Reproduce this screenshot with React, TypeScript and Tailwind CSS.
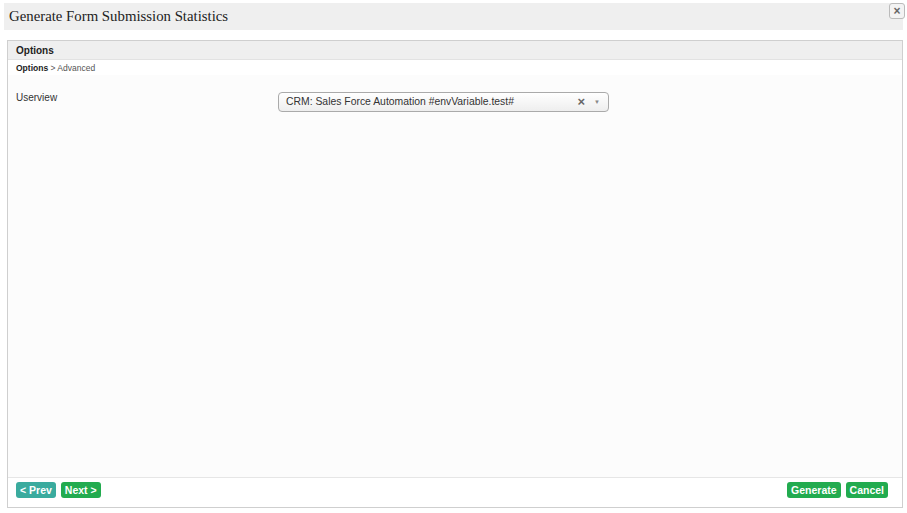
import React from "react";

export default function App() {
  return (
    <div className="w-[907px] h-[513px] bg-white relative overflow-hidden" style={{ fontFamily: '"Liberation Sans", Arial, sans-serif' }}>
      <div className="pt-[3px] px-[4px]">
        <div className="h-[27px] bg-[#efefef] flex items-center pl-[5px]">
          <span className="text-[14.8px] text-[#222]" style={{ fontFamily: '"Liberation Serif", "Times New Roman", serif' }}>
            Generate Form Submission Statistics
          </span>
        </div>
      </div>
      <button className="absolute left-[889px] top-[3px] w-[16px] h-[16px] rounded-[3px] border border-[#bbb] bg-[#f3f3f3] flex items-center justify-center text-[#666] text-[12px] font-bold leading-none">
        ×
      </button>
      <div className="ml-[7px] mt-[10px] w-[896px] h-[468px] border border-[#cfcfcf] flex flex-col">
        <div className="h-[19px] bg-[#efefef] border-b border-[#e2e2e2] flex items-center pl-[8px]">
          <span className="text-[10px] font-bold text-[#222]">Options</span>
        </div>
        <div className="pl-[8px] pt-[2px] text-[8.5px] text-[#555]">
          <span className="font-bold text-[#222]">Options</span> &gt; Advanced
        </div>
        <div className="flex-1 flex items-start pt-[17px] pl-[8px] bg-[#fcfcfc]">
          <span className="text-[10px] text-[#333] w-[262px] mt-[-2px]">Userview</span>
          <div className="w-[331px] h-[20px] rounded-[4px] border border-[#aaa] bg-gradient-to-b from-white to-[#eeeeee] flex items-center pl-[7px] pr-[8px] text-[10.4px] text-[#333]">
            <span className="flex-1">CRM: Sales Force Automation #envVariable.test#</span>
            <span className="text-[#666] text-[13px] font-bold mr-[9px] leading-none">×</span>
            <span className="text-[#888] text-[6px] leading-none">▼</span>
          </div>
        </div>
        <div className="h-[30px] border-t border-[#e6e6e6] bg-white flex items-start pt-[4px] px-[8px] gap-[5px]">
          <button className="h-[16px] px-[4px] rounded-[3px] bg-[#3aab9e] text-white text-[10.5px] font-bold leading-none">&lt; Prev</button>
          <button className="h-[16px] px-[4px] rounded-[3px] bg-[#22ab4f] text-white text-[10.5px] font-bold leading-none">Next &gt;</button>
          <div className="flex-1" />
          <button className="h-[16px] px-[4px] rounded-[3px] bg-[#22ab4f] text-white text-[10.5px] font-bold leading-none">Generate</button>
          <button className="h-[16px] px-[4px] rounded-[3px] bg-[#22ab4f] text-white text-[10.5px] font-bold leading-none mr-[6px]">Cancel</button>
        </div>
      </div>
    </div>
  );
}
